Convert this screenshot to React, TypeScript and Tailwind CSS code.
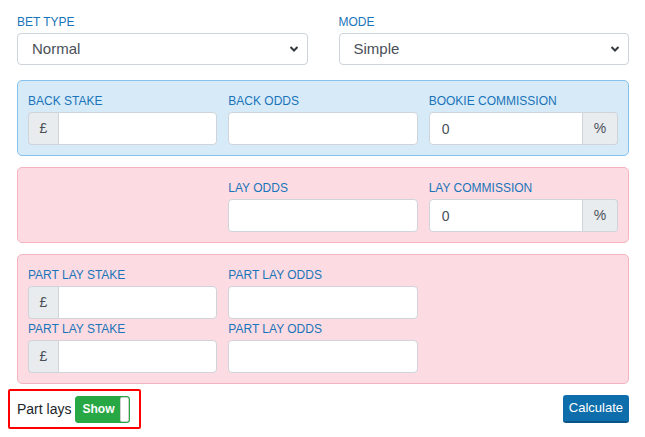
import React, { useState } from 'react';

const labelCls = 'block h-[21px] leading-[21px] text-[12px] uppercase text-[#1a74b9]';
const inputCls =
  'h-[33px] w-full min-w-0 border border-[#ced4da] bg-white px-[12px] text-[14px] text-[#495057] outline-none';
const addonCls =
  'flex h-[33px] w-[30px] shrink-0 items-center justify-center border border-[#ced4da] bg-[#e9ecef] text-[14px] text-[#495057]';

const Field: React.FC<{ label: string; prefix?: string; suffix?: string; value?: string }> = ({
  label,
  prefix,
  suffix,
  value,
}) => (
  <div>
    <label className={labelCls}>{label}</label>
    <div className="flex">
      {prefix && <span className={`${addonCls} rounded-l-[4px] border-r-0`}>{prefix}</span>}
      <input
        defaultValue={value}
        className={`${inputCls} ${prefix ? 'rounded-r-[4px]' : suffix ? 'rounded-l-[4px]' : 'rounded-[4px]'}`}
      />
      {suffix && <span className={`${addonCls} w-[35px] rounded-r-[4px] border-l-0`}>{suffix}</span>}
    </div>
  </div>
);

const Select: React.FC<{ label: string; options: string[] }> = ({ label, options }) => (
  <div>
    <label className={labelCls}>{label}</label>
    <div className="relative">
      <select className="h-[32px] w-full appearance-none rounded-[4px] border border-[#ced4da] bg-white pl-[14px] text-[15px] text-[#495057] outline-none">
        {options.map(o => (
          <option key={o}>{o}</option>
        ))}
      </select>
      <svg
        className="pointer-events-none absolute right-[9px] top-1/2 -translate-y-1/2"
        width="10"
        height="7"
        viewBox="0 0 10 7"
      >
        <path d="M1.5 1.5 L5 5 L8.5 1.5" fill="none" stroke="#343a40" strokeWidth="2" />
      </svg>
    </div>
  </div>
);

export default function App() {
  const [showParts, setShowParts] = useState(true);

  return (
    <div className="bg-white pl-[17px] pr-[16px] pt-[12px] font-['Liberation_Sans',Arial,sans-serif]">
      <div className="grid grid-cols-2 gap-[31px]">
        <Select label="Bet Type" options={['Normal', 'Free Bet SNR', 'Free Bet SR']} />
        <Select label="Mode" options={['Simple', 'Underlay', 'Overlay']} />
      </div>

      {/* back side */}
      <div className="mt-[15px] grid grid-cols-3 gap-x-[11px] rounded-[5px] border border-[#85c1ec] bg-[#d6eaf8] p-[10px]">
        <Field label="Back Stake" prefix="£" />
        <Field label="Back Odds" />
        <Field label="Bookie Commission" suffix="%" value="0" />
      </div>

      {/* lay side */}
      <div className="mt-[11px] grid grid-cols-3 gap-x-[11px] rounded-[5px] border border-[#f7b3bf] bg-[#fcdce2] p-[10px]">
        <div />
        <Field label="Lay Odds" />
        <Field label="Lay Commission" suffix="%" value="0" />
      </div>

      {showParts && (
        <div className="mt-[11px] grid grid-cols-3 gap-x-[11px] rounded-[5px] border border-[#f7b3bf] bg-[#fcdce2] p-[10px]">
          <Field label="Part Lay Stake" prefix="£" />
          <Field label="Part Lay Odds" />
          <div />
          <Field label="Part Lay Stake" prefix="£" />
          <Field label="Part Lay Odds" />
          <div />
        </div>
      )}

      <div className="mt-[5px] flex items-center justify-between">
        <div className="-ml-[9px] flex h-[40px] items-center gap-[4px] rounded-[2px] border-2 border-[#ff0000] pl-[7px] pr-[9px]">
          <span className="text-[14px] text-[#212529]">Part lays</span>
          <button
            onClick={() => setShowParts(!showParts)}
            className="flex h-[27px] w-[55px] overflow-hidden rounded-[3px] border border-[#28a745] bg-[#28a745]"
          >
            <span className="flex flex-1 items-center justify-center text-[12px] font-bold text-white">Show</span>
            <span className="h-full w-[9px] rounded-[2px] border border-[#d0d0d0] bg-white" />
          </button>
        </div>
        <button className="h-[28px] rounded-[3px] border-b-2 border-[#0a5586] bg-[#0d6eab] px-[6px] text-[13px] text-white">
          Calculate
        </button>
      </div>
    </div>
  );
}
